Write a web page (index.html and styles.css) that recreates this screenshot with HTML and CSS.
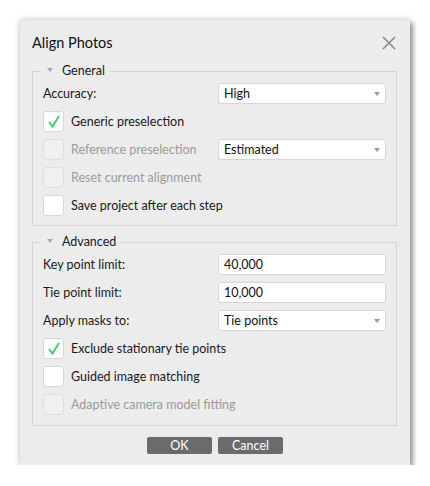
FILE: index.html
```html
<!DOCTYPE html>
<html lang="en">
<head>
<meta charset="utf-8">
<title>Align Photos</title>
<link rel="stylesheet" href="styles.css">
</head>
<body>
<div class="dialog">
  <div class="header">
    <div class="title">Align Photos</div>
    <svg class="close" width="14" height="14" viewBox="0 0 14 14"><path d="M1 1 L13 13 M13 1 L1 13" stroke="#8a8a8a" stroke-width="1.6" fill="none"/></svg>
  </div>

  <fieldset class="group">
    <legend class="legend"><span class="tri"></span>General</legend>
    <div class="rows">
      <div class="row">
        <span class="label">Accuracy:</span>
        <div class="combo"><span>High</span><span class="arrow"></span></div>
      </div>
      <div class="row">
        <span class="check-wrap wide"><span class="box"><svg width="21" height="21" viewBox="0 0 21 21"><path d="M6 11 L9.5 15.5 L16 5" stroke="#45cc6b" stroke-width="2" fill="none"/></svg></span><span class="label">Generic preselection</span></span>
      </div>
      <div class="row">
        <span class="check-wrap disabled"><span class="box"></span><span class="label">Reference preselection</span></span>
        <div class="combo"><span>Estimated</span><span class="arrow"></span></div>
      </div>
      <div class="row">
        <span class="check-wrap wide disabled"><span class="box"></span><span class="label">Reset current alignment</span></span>
      </div>
      <div class="row">
        <span class="check-wrap wide"><span class="box"></span><span class="label">Save project after each step</span></span>
      </div>
    </div>
  </fieldset>

  <fieldset class="group group2">
    <legend class="legend"><span class="tri"></span>Advanced</legend>
    <div class="rows">
      <div class="row">
        <span class="label">Key point limit:</span>
        <div class="field">40,000</div>
      </div>
      <div class="row">
        <span class="label">Tie point limit:</span>
        <div class="field">10,000</div>
      </div>
      <div class="row">
        <span class="label">Apply masks to:</span>
        <div class="combo"><span>Tie points</span><span class="arrow"></span></div>
      </div>
      <div class="row">
        <span class="check-wrap wide"><span class="box"><svg width="21" height="21" viewBox="0 0 21 21"><path d="M6 11 L9.5 15.5 L16 5" stroke="#45cc6b" stroke-width="2" fill="none"/></svg></span><span class="label">Exclude stationary tie points</span></span>
      </div>
      <div class="row">
        <span class="check-wrap wide"><span class="box"></span><span class="label">Guided image matching</span></span>
      </div>
      <div class="row">
        <span class="check-wrap wide disabled"><span class="box"></span><span class="label">Adaptive camera model fitting</span></span>
      </div>
    </div>
  </fieldset>

  <div class="buttons">
    <button class="btn">OK</button>
    <button class="btn">Cancel</button>
  </div>
</div>
</body>
</html>
```
FILE: styles.css
```css
html, body {
  margin: 0;
  padding: 0;
  background: #ffffff;
}
body {
  font-family: "Lato", "Liberation Sans", sans-serif;
  font-size: 12.5px;
  color: #1a1a1a;
}
.dialog {
  box-sizing: border-box;
  margin: 20px 0 0 20px;
  width: 390px;
  height: 445px;
  background: #ececec;
  box-shadow: 0 0 7px rgba(0,0,0,0.22), 3px 3px 5px rgba(0,0,0,0.35);
  display: flex;
  flex-direction: column;
}
.header {
  display: flex;
  justify-content: space-between;
  align-items: flex-start;
  padding: 13px 14px 10px 12px;
  height: 20px;
}
.title {
  font-size: 14.5px;
  line-height: 20px;
  color: #111;
}
.close {
  margin-top: 3px;
}
.group {
  margin: 0 13px 0 12px;
  padding: 4px 10px 9px 10px;
  border: 1px solid #d4d4d4;
  min-width: 0;
}
.group2 {
  margin-top: 8px;
  padding-bottom: 10px;
}
.legend {
  padding: 0 4px 0 7px;
  margin-left: -3px;
  height: 16px;
  line-height: 16px;
  display: flex;
  align-items: center;
  color: #1a1a1a;
}
.tri {
  width: 0;
  height: 0;
  border-left: 3px solid transparent;
  border-right: 3px solid transparent;
  border-top: 4px solid #a9a9a9;
  margin-right: 9px;
  margin-top: -2px;
}
.rows {
  display: flex;
  flex-direction: column;
  gap: 7px;
}
.row {
  display: grid;
  grid-template-columns: 175px 168px;
  height: 21px;
  align-items: center;
}
.label {
  line-height: 21px;
  white-space: nowrap;
}
.check-wrap {
  display: flex;
  align-items: center;
  gap: 7px;
}
.check-wrap.wide {
  grid-column: 1 / -1;
}
.box {
  box-sizing: border-box;
  flex: 0 0 21px;
  width: 21px;
  height: 21px;
  background: #ffffff;
  border: 1px solid #d6d6d6;
  border-radius: 3px;
  display: block;
  position: relative;
}
.box svg {
  position: absolute;
  left: -1px;
  top: -1px;
}
.disabled .box {
  background: #f0f0f0;
  border-color: #dedede;
}
.disabled .label {
  color: #9b9b9b;
}
.combo, .field {
  box-sizing: border-box;
  height: 21px;
  background: #ffffff;
  border: 1px solid #d6d6d6;
  border-radius: 3px;
  padding: 0 5px 0 5px;
  display: flex;
  align-items: center;
  justify-content: space-between;
  line-height: 19px;
  color: #111;
}
.arrow {
  width: 0;
  height: 0;
  border-left: 3.5px solid transparent;
  border-right: 3.5px solid transparent;
  border-top: 4px solid #9a9a9a;
}
.buttons {
  display: flex;
  justify-content: center;
  gap: 6px;
  margin-top: 11px;
}
.btn {
  width: 65px;
  height: 17px;
  padding: 0;
  border: none;
  border-radius: 2px;
  background: #6b6b6b;
  color: #ffffff;
  font-family: "Lato", "Liberation Sans", sans-serif;
  font-size: 12.5px;
  line-height: 17px;
}
```
